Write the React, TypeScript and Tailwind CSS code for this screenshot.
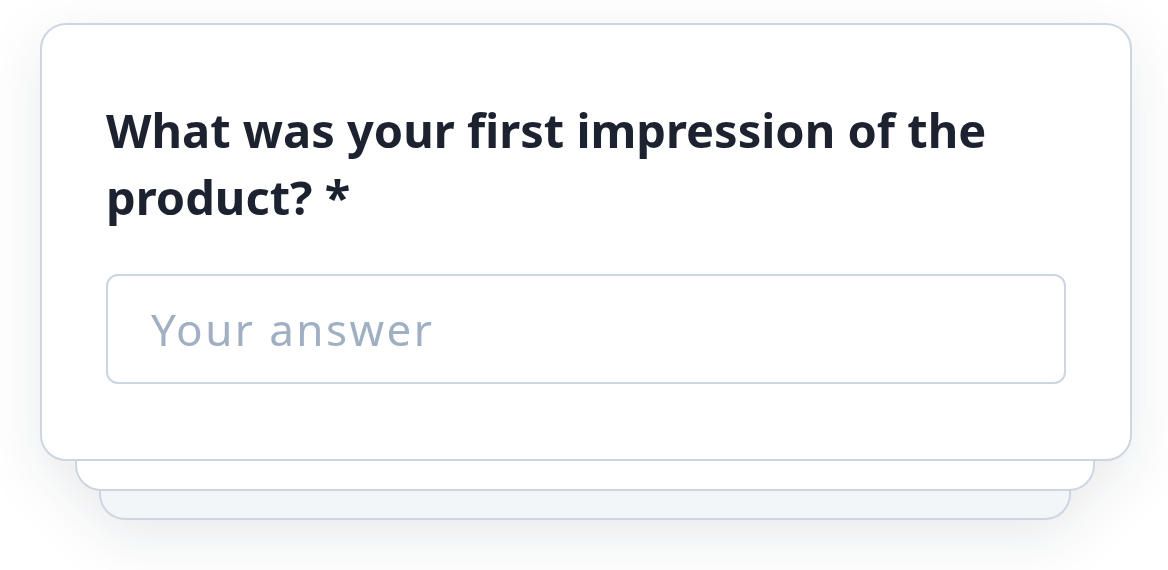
export default function App() {
  return (
    <div className="h-[570px] w-[1168px] overflow-hidden bg-white font-['Noto_Sans',sans-serif]">
      <div className="ml-[40px] mt-[23px] w-[1092px] drop-shadow-[0_18px_28px_rgba(15,23,42,0.09)]">
        <div className="relative z-30 rounded-[26px] border-[2.5px] border-[#ccd6e2] bg-white px-[64px] pb-[75px] pt-[72px]">
          <h2 className="text-[47px] font-bold leading-[67px] text-[#1c2230]">
            What was your first impression of the product? *
          </h2>
          <input
            placeholder="Your answer"
            className="mt-[43px] block h-[110px] w-full rounded-[12px] border-[2.5px] border-[#ccd6e2] bg-white px-[43px] text-[44px] tracking-[0.055em] text-[#1c2230] placeholder:text-[#9fb0c4] focus:outline-none"
          />
        </div>
        <div className="relative z-20 ml-[35px] mr-[37px] -mt-[30px] h-[60px] rounded-b-[26px] border-[2.5px] border-t-0 border-[#ccd6e2] bg-white" />
        <div className="relative z-10 ml-[59px] mr-[61px] -mt-[30px] h-[59px] rounded-b-[26px] border-[2.5px] border-t-0 border-[#ccd6e2] bg-[#f3f6f9]" />
      </div>
    </div>
  );
}
